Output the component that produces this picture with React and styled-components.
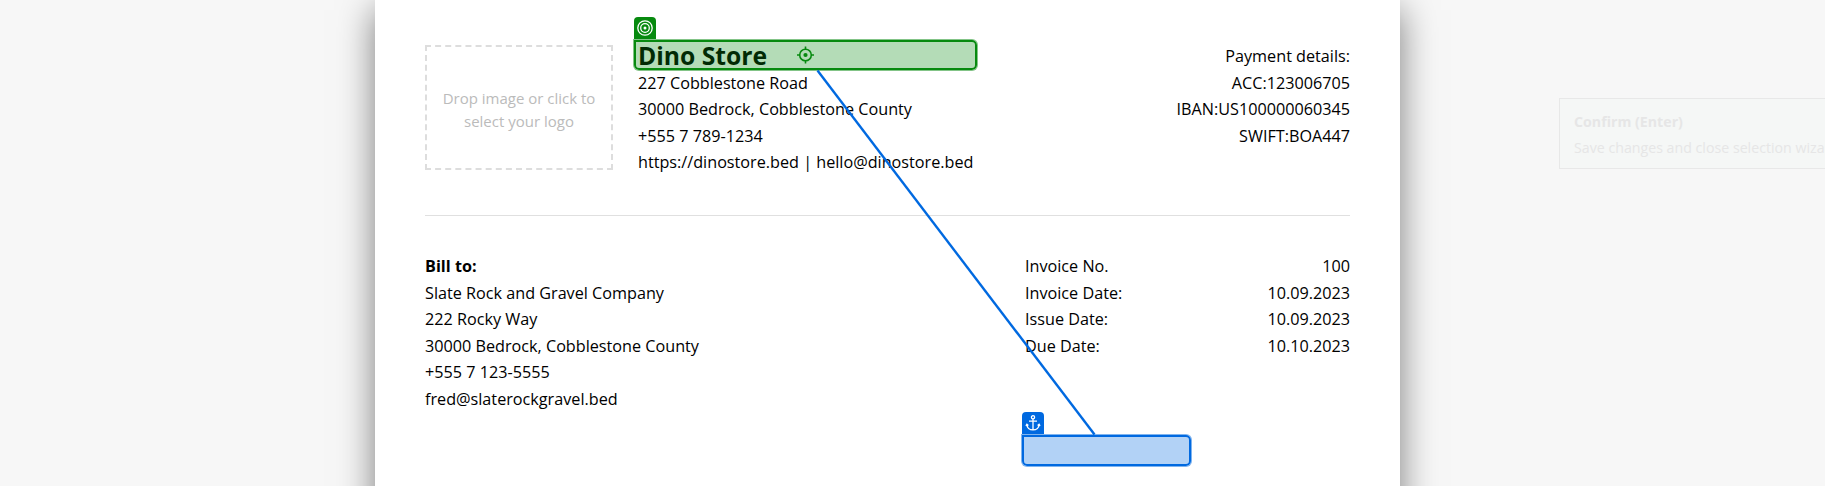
import React from 'react';
import styled, { createGlobalStyle } from 'styled-components';

const GREEN = '#078a0f';
const BLUE = '#0069e0';

const GlobalStyle = createGlobalStyle`
  *, *::before, *::after { box-sizing: border-box; }
  body { margin: 0; background: #f7f7f7; overflow: hidden; }
`;

const Screen = styled.main`
  position: relative;
  display: flex;
  padding-left: 375px;
  width: 1825px;
  height: 486px;
  overflow: hidden;
  font: 16.2px/26.5px 'Open Sans', sans-serif;
  color: #000;
`;

const Sheet = styled.article`
  flex: none;
  width: 1025px;
  height: 560px;
  padding: 43px 50px 0;
  background: #fff;
  box-shadow: 0 10px 34px rgba(0, 0, 0, 0.5);
`;

const Header = styled.header`
  display: flex;
  height: 173px;
  border-bottom: 1px solid #e0e0e0;
`;

const LogoDrop = styled.div`
  display: flex;
  align-items: center;
  justify-content: center;
  width: 188px;
  height: 125px;
  margin: 2px 25px 0 0;
  padding-top: 4px;
  border: 2px dashed #ddd;
  color: #bbb;
  font-size: 15px;
  line-height: 23px;
  text-align: center;
`;

const Lines = styled.div`
  display: flex;
  flex-direction: column;
  text-align: ${(p) => p.$align || 'left'};
  margin-left: ${(p) => (p.$align === 'right' ? 'auto' : 0)};
  white-space: nowrap;
`;

const StoreName = styled.h1`
  margin: 0;
  font-size: 24.7px;
  line-height: 26.5px;
  font-weight: 700;
`;

const Details = styled.section`
  display: flex;
  justify-content: space-between;
  padding-top: 37px;
`;

const Meta = styled.dl`
  width: 325px;
  margin: 0;
`;

const MetaRow = styled.div`
  display: flex;
  justify-content: space-between;
  dd { margin: 0; }
`;

const Hint = styled.aside`
  flex: none;
  width: 320px;
  height: 71px;
  margin: 98px 0 0 159px;
  padding: 10px 14px;
  border: 1px solid #e8e8e8;
  background: #f5f7f6;
  color: #e6e6e6;
  font-size: 14.2px;
  line-height: 26px;
  white-space: nowrap;
`;

const HintTitle = styled.div`
  font-weight: 700;
`;

const Selection = styled.div`
  position: absolute;
  left: ${(p) => p.$x}px;
  top: ${(p) => p.$y}px;
  width: ${(p) => p.$w}px;
  height: ${(p) => p.$h}px;
  border: 2px solid ${(p) => p.$color};
  border-radius: 0 5px 5px 5px;
  background: ${(p) => p.$fill};
  box-shadow: 0 0 0 1px ${(p) => p.$color}80;
`;

const Tag = styled.div`
  position: absolute;
  left: -2px;
  top: -25px;
  display: grid;
  place-items: center;
  width: 22px;
  height: 22px;
  border-radius: 4px 4px 0 0;
  background: ${(p) => p.$color};
`;

const Link = styled.svg`
  position: absolute;
  inset: 0;
  pointer-events: none;
`;

const TargetIcon = () => (
  <svg width="16" height="16" viewBox="0 0 16 16" fill="none" stroke="#fff" strokeWidth="1.3">
    <circle cx="8" cy="8" r="7.2" />
    <circle cx="8" cy="8" r="4.3" />
    <circle cx="8" cy="8" r="1.5" fill="#fff" stroke="none" />
  </svg>
);

const AnchorIcon = () => (
  <svg width="16" height="16" viewBox="0 0 16 16" fill="none" stroke="#fff" strokeWidth="1.3">
    <circle cx="8" cy="2.3" r="1.6" />
    <path d="M8 4v11M4 6.2h8M1.9 9.2c0 3.600 2.700 5.700 6.100 5.700s6.100-2.100 6.100-5.700M0.900 10.800l1-1.600 1.500 1.200M15.100 10.800l-1-1.600-1.500 1.200" />
  </svg>
);

const meta = [
  ['Invoice No.', '100'],
  ['Invoice Date:', '10.09.2023'],
  ['Issue Date:', '10.09.2023'],
  ['Due Date:', '10.10.2023'],
];

export default function App() {
  return (
    <>
      <GlobalStyle />
      <Screen>
        <Sheet>
          <Header>
            <LogoDrop>Drop image or click to<br />select your logo</LogoDrop>
            <Lines>
              <StoreName>Dino Store</StoreName>
              <span>227 Cobblestone Road</span>
              <span>30000 Bedrock, Cobblestone County</span>
              <span>+555 7 789-1234</span>
              <span>https://dinostore.bed | hello@dinostore.bed</span>
            </Lines>
            <Lines $align="right">
              <span>Payment details:</span>
              <span>ACC:123006705</span>
              <span>IBAN:US100000060345</span>
              <span>SWIFT:BOA447</span>
            </Lines>
          </Header>
          <Details>
            <Lines>
              <b>Bill to:</b>
              <span>Slate Rock and Gravel Company</span>
              <span>222 Rocky Way</span>
              <span>30000 Bedrock, Cobblestone County</span>
              <span>+555 7 123-5555</span>
              <span>fred@slaterockgravel.bed</span>
            </Lines>
            <Meta>
              {meta.map(([label, value]) => (
                <MetaRow key={label}><dt>{label}</dt><dd>{value}</dd></MetaRow>
              ))}
            </Meta>
          </Details>
        </Sheet>
        <Hint>
          <HintTitle>Confirm (Enter)</HintTitle>
          <div>Save changes and close selection wizard</div>
        </Hint>
        <Selection $x={634} $y={40} $w={343} $h={30} $color={GREEN} $fill="rgba(7, 138, 15, 0.3)">
          <Tag $color={GREEN}><TargetIcon /></Tag>
        </Selection>
        <Selection $x={1022} $y={435} $w={169} $h={31} $color={BLUE} $fill="rgba(0, 105, 224, 0.3)">
          <Tag $color={BLUE}><AnchorIcon /></Tag>
        </Selection>
        <Link width="1825" height="486">
          <line x1="817.500" y1="70.500" x2="1094.500" y2="434.500" stroke={BLUE} strokeWidth="2.400" />
          <g stroke={GREEN} strokeWidth="1.600" fill="none">
            <circle cx="805.500" cy="55" r="5.800" />
            <circle cx="805.500" cy="55" r="2.100" fill={GREEN} stroke="none" />
            <path d="M805.500 46.500v3M805.500 60.500v3M797 55h3M811 55h3" />
          </g>
        </Link>
      </Screen>
    </>
  );
}
